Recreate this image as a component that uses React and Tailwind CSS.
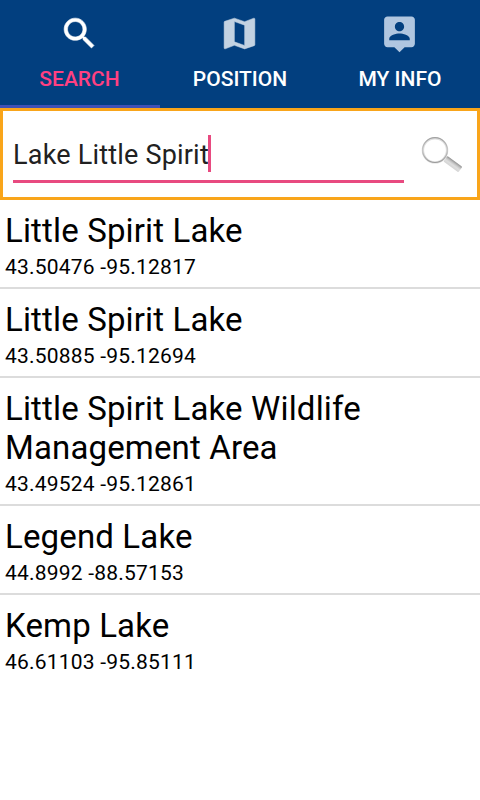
const places = [
  { id: 1, name: 'Little Spirit Lake', coords: '43.50476 -95.12817' },
  { id: 2, name: 'Little Spirit Lake', coords: '43.50885 -95.12694' },
  { id: 3, name: 'Little Spirit Lake Wildlife Management Area', coords: '43.49524 -95.12861' },
  { id: 4, name: 'Legend Lake', coords: '44.8992 -88.57153' },
  { id: 5, name: 'Kemp Lake', coords: '46.61103 -95.85111' },
];

const tabs = [
  {
    label: 'SEARCH',
    active: true,
    icon: 'fill-white stroke-white stroke-[0.35]',
    path: 'M15.5 14h-.79l-.28-.27C15.41 12.59 16 11.11 16 9.5 16 5.91 13.09 3 9.5 3S3 5.91 3 9.5 5.91 16 9.5 16c1.61 0 3.09-.59 4.23-1.57l.27.28v.79l5 4.99L20.49 19l-4.99-5zm-6 0C7.01 14 5 11.99 5 9.5S7.01 5 9.5 5 14 7.01 14 9.5 11.99 14 9.5 14z',
  },
  {
    label: 'POSITION',
    icon: 'fill-[#c3d2e2] stroke-[#c3d2e2] stroke-[0.3]',
    path: 'M20.5 3l-.16.03L15 5.1 9 3 3.36 4.9c-.21.07-.36.25-.36.48V20.5c0 .28.22.5.5.5l.16-.03L9 18.9l6 2.1 5.64-1.9c.21-.07.36-.25.36-.48V3.5c0-.28-.22-.5-.5-.5zM15 19l-6-2.11V5l6 2.11V19z',
  },
  {
    label: 'MY INFO',
    icon: 'fill-[#b0c6e0]',
    path: 'M19 2H5c-1.11 0-2 .9-2 2v14c0 1.1.89 2 2 2h4l3 3 3-3h4c1.1 0 2-.9 2-2V4c0-1.1-.9-2-2-2zm-7 3.3c1.49 0 2.7 1.21 2.7 2.7 0 1.49-1.21 2.7-2.7 2.7-1.49 0-2.7-1.21-2.7-2.7 0-1.49 1.21-2.7 2.7-2.7zM18 16H6v-.9c0-2 4-3.1 6-3.1s6 1.1 6 3.1v.9z',
  },
];

function Tab({ label, path, icon, active }) {
  return (
    <button className={`flex-1 flex flex-col items-center pt-[13px] border-b-[3px] ${active ? 'border-[#3f51b5]' : 'border-transparent'}`}>
      <svg viewBox="0 0 24 24" className={`size-[41px] mr-px ${icon}`}>
        <path d={path} />
      </svg>
      <span className={`mt-[13px] text-[21px] leading-[25px] font-medium ${active ? 'mr-px text-[#ff4081]' : 'text-white'}`}>{label}</span>
    </button>
  );
}

function Magnifier() {
  return (
    <svg viewBox="0 0 48 48" className="size-12">
      <defs>
        <linearGradient id="rim" x1="0" y1="0" x2="0" y2="1">
          <stop offset="0" stopColor="#a0a0a0" />
          <stop offset="0.5" stopColor="#c6c6c6" />
          <stop offset="1" stopColor="#9a9a9a" />
        </linearGradient>
        <linearGradient id="handle" x1="0" y1="0" x2="0" y2="1">
          <stop offset="0" stopColor="#929292" />
          <stop offset="0.35" stopColor="#c8c8c8" />
          <stop offset="0.6" stopColor="#dedede" />
          <stop offset="1" stopColor="#d4d4d4" />
        </linearGradient>
      </defs>
      <circle cx="17" cy="20.3" r="12.1" fill="none" stroke="#dedede" strokeWidth="2.4" />
      <circle cx="17" cy="20.1" r="12.4" fill="none" stroke="url(#rim)" strokeWidth="1.2" />
      <rect x="0" y="-3" width="18.5" height="6.8" rx="1" fill="url(#handle)" transform="translate(27.6 28.4) rotate(36)" />
    </svg>
  );
}

export default function App() {
  return (
    <div className="w-full h-screen bg-white overflow-hidden font-['Roboto',sans-serif]">
      <nav className="flex h-[108px] bg-[#023f7f]">
        {tabs.map((t) => <Tab key={t.label} {...t} />)}
      </nav>

      <div className="flex h-[92px] border-[3px] border-[#f9a51a]">
        <div className="flex items-center w-[391px] h-[72px] ml-[10px] border-b-[3px] border-[#e84a80] pt-4">
          <span className="pt-0.5 text-[27px] leading-8 tracking-[0.2px] text-[#212121]">Lake Little Spirit</span>
          <span className="w-[3px] h-[37px] -ml-px bg-[#e84a80]" />
        </div>
        <div className="ml-[14px] mt-[19px]">
          <Magnifier />
        </div>
      </div>

      <ul>
        {places.map((p, i) => (
          <li key={p.id} className={`px-[5px] pt-[11px] pb-[7px] ${i < places.length - 1 ? 'border-b-2 border-[#dcdcdc]' : ''}`}>
            <p className="text-[33px] leading-[39px] tracking-[0.15px] text-black">{p.name}</p>
            <p className="mt-[5px] text-[21px] leading-[25px] tracking-[0.2px] text-black">{p.coords}</p>
          </li>
        ))}
      </ul>
    </div>
  );
}
